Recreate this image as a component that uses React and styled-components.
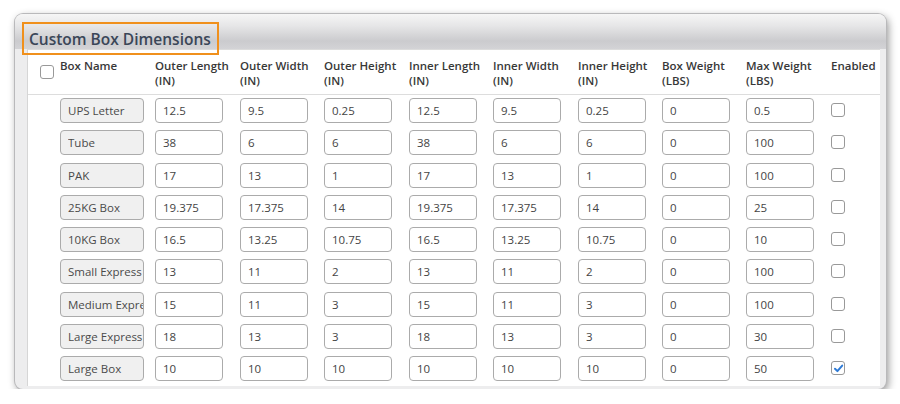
import React from "react";
import styled, { createGlobalStyle } from "styled-components";

const GlobalStyle = createGlobalStyle`
  html, body {
    margin: 0;
    padding: 0;
    background: #ffffff;
  }
  body {
    font-family: "Open Sans", "Noto Sans", "Liberation Sans", sans-serif;
  }
`;

const columns = [
  ["Box Name", ""],
  ["Outer Length", "(IN)"],
  ["Outer Width", "(IN)"],
  ["Outer Height", "(IN)"],
  ["Inner Length", "(IN)"],
  ["Inner Width", "(IN)"],
  ["Inner Height", "(IN)"],
  ["Box Weight", "(LBS)"],
  ["Max Weight", "(LBS)"],
];

const boxes = [
  { name: "UPS Letter", dims: ["12.5", "9.5", "0.25", "12.5", "9.5", "0.25", "0", "0.5"], on: false },
  { name: "Tube", dims: ["38", "6", "6", "38", "6", "6", "0", "100"], on: false },
  { name: "PAK", dims: ["17", "13", "1", "17", "13", "1", "0", "100"], on: false },
  { name: "25KG Box", dims: ["19.375", "17.375", "14", "19.375", "17.375", "14", "0", "25"], on: false },
  { name: "10KG Box", dims: ["16.5", "13.25", "10.75", "16.5", "13.25", "10.75", "0", "10"], on: false },
  { name: "Small Express Box", dims: ["13", "11", "2", "13", "11", "2", "0", "100"], on: false },
  { name: "Medium Express Box", dims: ["15", "11", "3", "15", "11", "3", "0", "100"], on: false },
  { name: "Large Express Box", dims: ["18", "13", "3", "18", "13", "3", "0", "30"], on: false },
  { name: "Large Box", dims: ["10", "10", "10", "10", "10", "10", "0", "50"], on: true },
];

const App = () => (
  <>
    <GlobalStyle />
    <Window>
      <TitleBar />
      <Highlight>
        <Title>Custom Box Dimensions</Title>
      </Highlight>
      <Panel>
        <Table>
          <HeadCell>
            <CheckBox $header />
          </HeadCell>
          {columns.map(([a, b]) => (
            <HeadCell key={a}>
              {a}
              <br />
              {b}
            </HeadCell>
          ))}
          <HeadCell>Enabled</HeadCell>
          {boxes.map((box) => (
            <Row key={box.name}>
              <Cell />
              <Cell>
                <NameInput readOnly value={box.name} />
              </Cell>
              {box.dims.map((d, i) => (
                <Cell key={i}>
                  <NumInput readOnly value={d} />
                </Cell>
              ))}
              <Cell>
                <CheckBox>
                  {box.on && (
                    <svg width="11" height="11" viewBox="0 0 11 11">
                      <path
                        d="M2 5.8 L4.4 8.1 L9.2 2.6"
                        fill="none"
                        stroke="#2f7bd6"
                        strokeWidth="2"
                        strokeLinecap="round"
                        strokeLinejoin="round"
                      />
                    </svg>
                  )}
                </CheckBox>
              </Cell>
            </Row>
          ))}
        </Table>
      </Panel>
    </Window>
  </>
);

export default App;

const Window = styled.div`
  position: relative;
  margin: 14px 0 0 15px;
  width: 871px;
  height: 375px;
  border-radius: 8px;
  background: #ededee;
  box-shadow: 0 0 0 1px #b9b9bb, 2px 3px 8px rgba(0, 0, 0, 0.45);
  display: flex;
  flex-direction: column;
  overflow: hidden;
`;

const TitleBar = styled.div`
  height: 35px;
  flex: none;
  background: linear-gradient(#f6f6f6 0px, #e6e6e7 12px, #cbcbce 27px, #d3d3d6 35px);
`;

const Highlight = styled.div`
  position: absolute;
  left: 7px;
  top: 8px;
  width: 197px;
  height: 33px;
  border: 2px solid #f0901c;
  display: flex;
  align-items: flex-end;
  padding: 0 0 4px 5px;
  box-sizing: border-box;
  z-index: 2;
`;

const Title = styled.div`
  font-size: 15.5px;
  font-weight: 600;
  color: #3a4658;
  line-height: 20px;
  white-space: nowrap;
`;

const Panel = styled.div`
  flex: 1;
  margin: 0 6px 3px 12px;
  background: #ffffff;
  border-left: 1px solid #d6d6d6;
  border-top: 1px solid #dcdcdc;
  box-sizing: border-box;
`;

const Table = styled.div`
  display: grid;
  grid-template-columns: 32px 95px 85px 84px 85px 84px 85px 84px 84px 85px 1fr;
  grid-template-rows: 45px;
  grid-auto-rows: 32.3px;
`;

const HeadCell = styled.div`
  box-sizing: border-box;
  border-bottom: 1px solid #dddddd;
  padding-top: 8px;
  font-size: 11.5px;
  line-height: 15px;
  font-weight: 600;
  color: #383838;
  white-space: nowrap;
`;

const Row = styled.div`
  display: contents;
`;

const Cell = styled.div`
  display: flex;
  align-items: flex-start;
  padding-top: 3px;
  box-sizing: border-box;
`;

const BaseInput = styled.input`
  height: 25px;
  box-sizing: border-box;
  border: 1px solid #ababab;
  border-radius: 4px;
  padding: 0 0 0 7px;
  font-family: "Open Sans", "Noto Sans", "Liberation Sans", sans-serif;
  font-size: 11.5px;
  color: #444444;
  outline: none;
  margin: 0;
`;

const NameInput = styled(BaseInput)`
  width: 84px;
  background: #f0f0f0;
  color: #4a4a4a;
`;

const NumInput = styled(BaseInput)`
  width: 68px;
  background: #ffffff;
`;

const CheckBox = styled.span`
  width: 14px;
  height: 14px;
  box-sizing: border-box;
  border: 1px solid #999999;
  border-radius: 3px;
  background: #ffffff;
  display: inline-flex;
  align-items: center;
  justify-content: center;
  margin: ${(p) => (p.$header ? "7px 0 0 12px" : "5px 0 0 0")};
`;
